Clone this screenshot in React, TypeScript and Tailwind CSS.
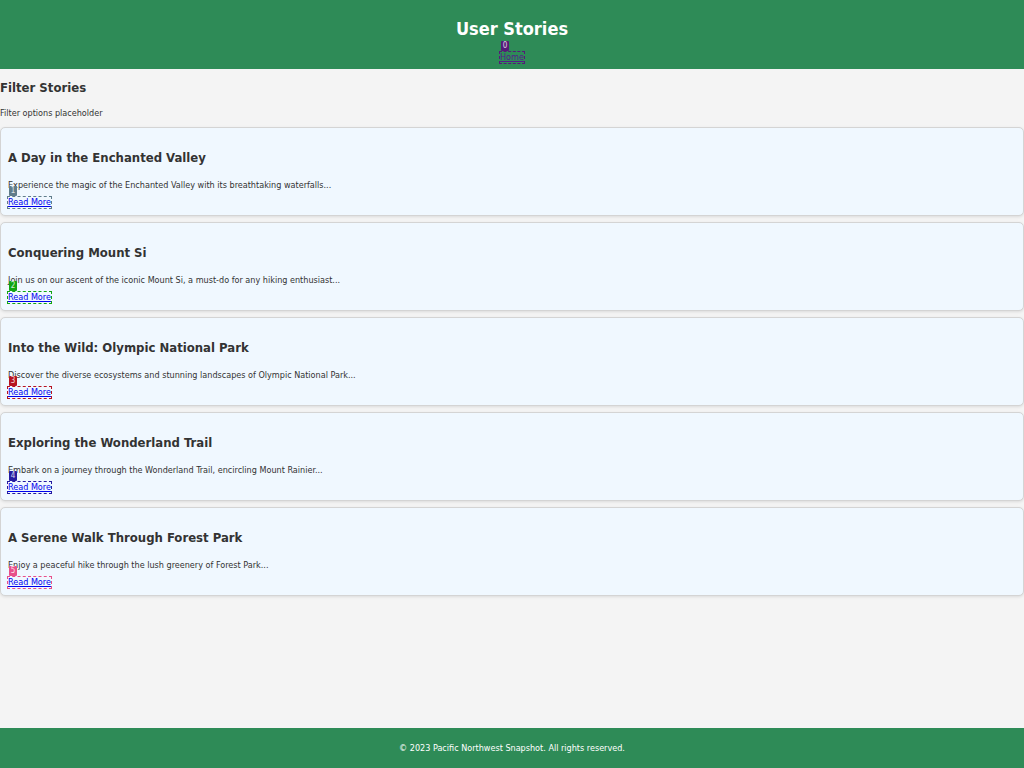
const stories = [
  { title: "A Day in the Enchanted Valley", text: "Experience the magic of the Enchanted Valley with its breathtaking waterfalls...", line: "border-[#607d8b]", badge: "bg-[#607d8b]" },
  { title: "Conquering Mount Si", text: "Join us on our ascent of the iconic Mount Si, a must-do for any hiking enthusiast...", line: "border-[#12a512]", badge: "bg-[#12a512]" },
  { title: "Into the Wild: Olympic National Park", text: "Discover the diverse ecosystems and stunning landscapes of Olympic National Park...", line: "border-[#b71320]", badge: "bg-[#b71320]" },
  { title: "Exploring the Wonderland Trail", text: "Embark on a journey through the Wonderland Trail, encircling Mount Rainier...", line: "border-[#251ba0]", badge: "bg-[#251ba0]" },
  { title: "A Serene Walk Through Forest Park", text: "Enjoy a peaceful hike through the lush greenery of Forest Park...", line: "border-[#e8508a]", badge: "bg-[#e8508a]" },
];

type MarkedLinkProps = { label: string; index: number; line: string; badge: string; color: string };

function MarkedLink({ label, index, line, badge, color }: MarkedLinkProps) {
  return (
    <a href="#" className={`relative inline-block leading-[11px] underline ${color}`}>
      {label}
      <span aria-hidden="true" className={`pointer-events-none absolute -inset-px border border-dashed ${line}`} />
      <span className={`absolute bottom-full left-px mb-px flex h-[10px] w-2 items-center justify-center rounded-[1px] text-[8px] leading-none text-white/80 ${badge}`}>
        {index}
      </span>
    </a>
  );
}

export default function App() {
  return (
    <div className="flex min-h-screen flex-col bg-[#f4f4f4] font-['DejaVu_Sans_Condensed','DejaVu_Sans',sans-serif] text-[9px] leading-4 text-[#333]">
      <header className="flex flex-col items-center bg-[#2e8b57] pt-[17px] pb-[6px]">
        <h1 className="text-[18px] leading-6 font-bold text-white">User Stories</h1>
        <nav className="flex pt-[11px]">
          <MarkedLink label="Home" index={0} line="border-[#551a78]" badge="bg-[#551a78]" color="text-[#551a8b]" />
        </nav>
      </header>
      <main className="flex-1">
        <section className="pt-[7px] pb-[6px]">
          <h2 className="text-[13px] leading-6 font-bold">Filter Stories</h2>
          <p className="pt-[5px]">Filter options placeholder</p>
        </section>
        <section className="flex flex-col gap-[6px]">
          {stories.map((story, i) => (
            <article key={story.title} className="rounded-[5px] border border-[#d4d4d4] bg-[#f0f8ff] px-[7px] pt-[18px] pb-[7px] shadow-[0_1px_3px_rgba(0,0,0,0.1)]">
              <h2 className="text-[13px] leading-6 font-bold">{story.title}</h2>
              <p className="pt-[7px]">{story.text}</p>
              <div className="flex pt-1">
                <MarkedLink label="Read More" index={i + 1} line={story.line} badge={story.badge} color="text-[#0000ee]" />
              </div>
            </article>
          ))}
        </section>
      </main>
      <footer className="bg-[#2e8b57] py-3 text-center text-white">
        <p>© 2023 Pacific Northwest Snapshot. All rights reserved.</p>
      </footer>
    </div>
  );
}
